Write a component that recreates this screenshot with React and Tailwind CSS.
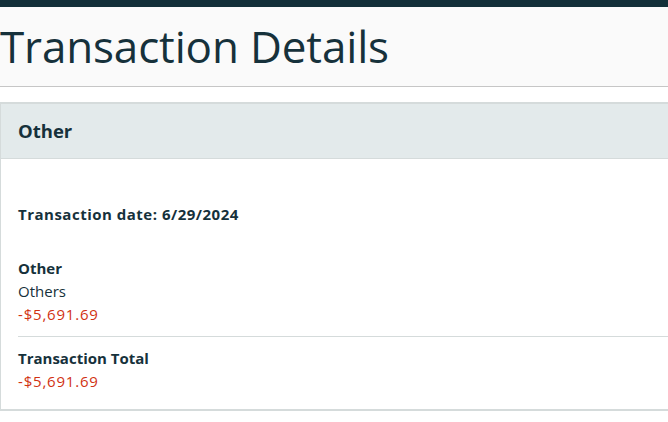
export default function App() {
  return (
    <div className="min-h-screen bg-white text-[#16313b]" style={{ fontFamily: '"Open Sans", "Noto Sans", sans-serif' }}>
      <div className="h-[7px] bg-[#132f39]" />
      <header className="h-[80px] bg-[#fafafa] border-b border-[#c6c6c6] flex items-center">
        <h1 className="text-[44px] leading-none tracking-[-0.15px] -mt-[1px]">Transaction Details</h1>
      </header>

      <section className="mt-[15px] border-l border-t-2 border-b-2 border-[#d5dbdb]">
        <div className="h-[55px] bg-[#e3eaeb] border-b border-[#d5dbdb] px-[17px] flex items-center">
          <h2 className="text-[18.5px] font-bold">Other</h2>
        </div>
        <div className="pt-[44px] pb-[16px] text-[15px] leading-[23px]">
          <p className="px-[17px] font-bold tracking-[0.5px]">Transaction date: 6/29/2024</p>
          <div className="mt-[31px] ml-[17px] pb-[10px] border-b border-[#d5dbdb]">
            <p className="font-bold">Other</p>
            <p>Others</p>
            <p className="text-[#d13212] tracking-[0.8px]">-$5,691.69</p>
          </div>
          <div className="mt-[10px] px-[17px]">
            <p className="font-bold">Transaction Total</p>
            <p className="text-[#d13212] tracking-[0.8px]">-$5,691.69</p>
          </div>
        </div>
      </section>
    </div>
  );
}
